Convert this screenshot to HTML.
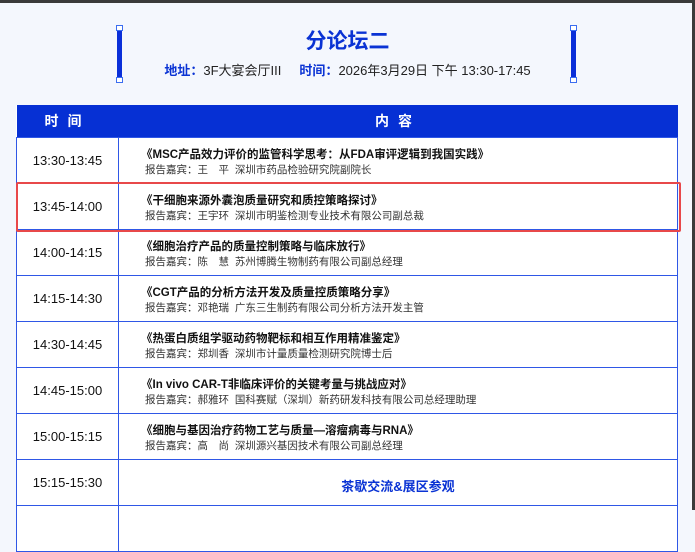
<!DOCTYPE html><html><head><meta charset="utf-8"><style>
*{margin:0;padding:0;box-sizing:border-box}
body{width:695px;height:510px;overflow:hidden;background:#f4f7fd;font-family:"Liberation Sans","Noto Sans CJK SC",sans-serif;position:relative}
.top{position:absolute;left:0;top:0;width:695px;height:3px;background:#3a3a3a}
.rs{position:absolute;right:0;top:0;width:3px;height:510px;background:#3a3a3a}
.bar{position:absolute;top:25px;width:7px;height:58px}
.bar .m{position:absolute;left:1px;top:6px;width:5px;height:46px;background:#0a2fd9}
.bar .c{position:absolute;left:0;width:7px;height:6px;border:1px solid #3b6df0;background:#fff}
h1{position:absolute;left:0;width:695px;top:29px;text-align:center;font-size:21px;color:#0a33d4;font-weight:bold;line-height:26px}
.sub{position:absolute;left:0;width:695px;top:62px;text-align:center;font-size:13px;color:#222;line-height:18px}
.sub b{color:#0a33d4}
table{position:absolute;left:16px;top:105px;width:662px;border-collapse:collapse;background:#fff}
th{background:#0630d4;color:#fff;font-size:14px;height:32px;letter-spacing:9px;font-weight:bold}
td{border:1px solid #2f57e6;height:46px;font-size:13px;color:#111}
td.t{width:102px;text-align:center}
td.c{padding-left:22px;padding-top:5px}
.tt{font-weight:bold;font-size:11.5px;line-height:15px;margin-bottom:0}
.sp{font-size:10.5px;color:#333;padding-left:4px;line-height:15px}
.hl{position:absolute;left:16px;top:182px;width:665px;height:50px;border:2px solid #e8484a;border-radius:2px}
td.bk{text-align:center;color:#0a33d4;font-weight:bold;font-size:13px;padding-left:0;padding-top:6px}
</style></head><body>
<div class="top"></div>
<div class="bar" style="left:116px"><div class="c" style="top:0"></div><div class="m"></div><div class="c" style="top:52px"></div></div>
<div class="bar" style="left:570px"><div class="c" style="top:0"></div><div class="m"></div><div class="c" style="top:52px"></div></div>
<h1>分论坛二</h1>
<div class="sub"><b>地址：</b>3F大宴会厅III &nbsp;&nbsp;&nbsp;&nbsp;<b>时间：</b>2026年3月29日 下午 13:30-17:45</div>
<table>
<tr><th>时间</th><th>内容</th></tr>
<tr><td class="t">13:30-13:45</td><td class="c"><div class="tt">《MSC产品效力评价的监管科学思考：从FDA审评逻辑到我国实践》</div><div class="sp">报告嘉宾：王　平 &nbsp;深圳市药品检验研究院副院长</div></td></tr>
<tr><td class="t">13:45-14:00</td><td class="c"><div class="tt">《干细胞来源外囊泡质量研究和质控策略探讨》</div><div class="sp">报告嘉宾：王宇环 &nbsp;深圳市明鉴检测专业技术有限公司副总裁</div></td></tr>
<tr><td class="t">14:00-14:15</td><td class="c"><div class="tt">《细胞治疗产品的质量控制策略与临床放行》</div><div class="sp">报告嘉宾：陈　慧 &nbsp;苏州博腾生物制药有限公司副总经理</div></td></tr>
<tr><td class="t">14:15-14:30</td><td class="c"><div class="tt">《CGT产品的分析方法开发及质量控质策略分享》</div><div class="sp">报告嘉宾：邓艳瑞 &nbsp;广东三生制药有限公司分析方法开发主管</div></td></tr>
<tr><td class="t">14:30-14:45</td><td class="c"><div class="tt">《热蛋白质组学驱动药物靶标和相互作用精准鉴定》</div><div class="sp">报告嘉宾：郑圳香 &nbsp;深圳市计量质量检测研究院博士后</div></td></tr>
<tr><td class="t">14:45-15:00</td><td class="c"><div class="tt">《In vivo CAR-T非临床评价的关键考量与挑战应对》</div><div class="sp">报告嘉宾：郝雅环 &nbsp;国科赛赋（深圳）新药研发科技有限公司总经理助理</div></td></tr>
<tr><td class="t">15:00-15:15</td><td class="c"><div class="tt">《细胞与基因治疗药物工艺与质量—溶瘤病毒与RNA》</div><div class="sp">报告嘉宾：高　尚 &nbsp;深圳源兴基因技术有限公司副总经理</div></td></tr>
<tr><td class="t">15:15-15:30</td><td class="bk">茶歇交流&amp;展区参观</td></tr>
<tr><td class="t"></td><td class="c"></td></tr>
</table>
<div class="hl"></div>
<div class="rs"></div>
</body></html>
